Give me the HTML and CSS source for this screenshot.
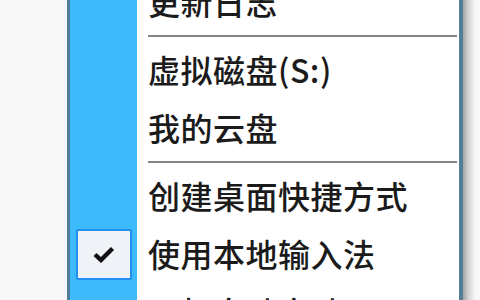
FILE: index.html
```html
<!DOCTYPE html>
<html lang="zh-CN">
<head>
<meta charset="utf-8">
<title>菜单</title>
<link rel="stylesheet" href="styles.css">
</head>
<body>
<div class="desk">
  <div class="menu">
    <ul class="list">
      <li class="item"><span class="rail"></span><span class="label">更新日志</span></li>
      <li class="sep"><span class="rail"></span><span class="line"></span></li>
      <li class="item"><span class="rail"></span><span class="label">虚拟磁盘(S:)</span></li>
      <li class="item"><span class="rail"></span><span class="label">我的云盘</span></li>
      <li class="sep"><span class="rail"></span><span class="line"></span></li>
      <li class="item"><span class="rail"></span><span class="label">创建桌面快捷方式</span></li>
      <li class="item checked">
        <span class="rail"><span class="check"><svg width="22" height="17" viewBox="0 0 22 17"><path d="M2 8.5 L8 14 L19.5 2.5" fill="none" stroke="#111" stroke-width="4.4" stroke-linejoin="miter" stroke-linecap="butt"/></svg></span></span>
        <span class="label">使用本地输入法</span>
      </li>
      <li class="item"><span class="rail"></span><span class="label">开机自动启动</span></li>
    </ul>
  </div>
  <div class="shadow"></div>
</div>
</body>
</html>
```
FILE: styles.css
```css
html, body {
  margin: 0;
  padding: 0;
  background: #f8f8f8;
  overflow: hidden;
}
.desk {
  display: flex;
  height: 300px;
  padding-left: 67px;
  overflow: hidden;
}
.menu {
  width: 389px;
  border-left: 3px solid #4f7f98;
  border-right: 4px solid #52809a;
  background: #ffffff;
  overflow: hidden;
}
.shadow {
  width: 12px;
  background: linear-gradient(to right, #a4a4a4, #d4d4d4 45%, #f6f6f6);
}
.list {
  list-style: none;
  margin: -28px 0 0 0;
  padding: 0;
}
.item, .sep {
  display: flex;
  align-items: stretch;
}
.item { height: 58px; }
.sep { height: 10px; }
.rail {
  width: 67px;
  flex: none;
  background: #3dbafc;
  display: flex;
  align-items: center;
}
.label {
  padding-left: 11px;
  display: flex;
  align-items: center;
  font-family: "Noto Sans CJK SC", "Noto Sans", sans-serif;
  font-size: 32px;
  font-weight: 500;
  letter-spacing: 0.5px;
  color: #1b1b1b;
  white-space: nowrap;
}
.line {
  flex: 1;
  margin: 5px 2px 0 11px;
  height: 2px;
  background: #858585;
}
.check {
  margin-left: 6px;
  margin-top: 2px;
  width: 52px;
  height: 47px;
  border: 2px solid #1f8ff0;
  border-radius: 2px;
  background: #eff2f6;
  display: flex;
  align-items: center;
  justify-content: center;
}
```
